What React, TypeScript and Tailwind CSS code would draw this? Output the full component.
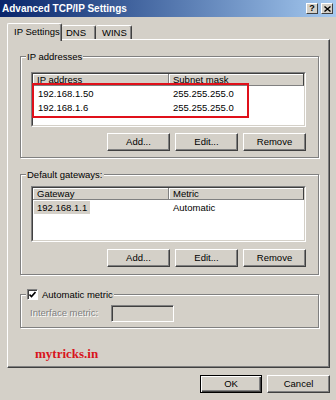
import type { ReactNode } from 'react';

const font = { fontFamily: '"Liberation Sans", Arial, sans-serif' };

function Btn({ label, isDefault = false }: { label: string; isDefault?: boolean }) {
  if (isDefault) {
    return (
      <button className="w-[62px] h-[18px] bg-[#d4d0c8] border border-black shadow-[inset_1px_1px_0_#fff,inset_-1px_-1px_0_#404040,inset_-2px_-2px_0_#808080] text-[9.5px] leading-none text-black">
        {label}
      </button>
    );
  }
  return (
    <button className="w-[63px] h-[18px] bg-[#d4d0c8] border border-t-white border-l-white border-r-[#404040] border-b-[#404040] shadow-[inset_-1px_-1px_0_#808080] text-[9.5px] leading-none text-black">
      {label}
    </button>
  );
}

function Group({ label, children, className }: { label: ReactNode; children: ReactNode; className: string }) {
  return (
    <div className={'relative w-[299px] border border-[#808080] shadow-[inset_1px_1px_0_#fff,1px_1px_0_#fff] ' + className}>
      <div className="absolute -top-[7px] left-[5px] px-[1px] bg-[#d4d0c8] flex items-center h-[13px] text-[9.5px] leading-[13px]">
        {label}
      </div>
      {children}
    </div>
  );
}

function ListView({ height, cols, children }: { height: string; cols: [string, string]; children: ReactNode }) {
  return (
    <div className={'relative border border-t-[#808080] border-l-[#808080] border-r-white border-b-white ' + height}>
      <div className="h-full bg-white border border-t-[#404040] border-l-[#404040] border-r-[#d4d0c8] border-b-[#d4d0c8]">
        <div className="flex h-[12px] text-[9.5px] leading-[11px]">
          <div className="w-[136px] bg-[#d4d0c8] border-r border-b border-r-[#808080] border-b-[#808080] shadow-[inset_1px_1px_0_#fff] pl-[4px]">
            {cols[0]}
          </div>
          <div className="flex-1 bg-[#d4d0c8] border-r border-b border-r-[#404040] border-b-[#808080] shadow-[inset_1px_1px_0_#fff] pl-[4px]">
            {cols[1]}
          </div>
        </div>
        {children}
      </div>
    </div>
  );
}

function Row({ a, b, selected = false }: { a: string; b: string; selected?: boolean }) {
  return (
    <div className="flex h-[13px] items-center text-[9.5px] leading-[13px] mt-[1px]">
      <div className="w-[136px] pl-[1px]">
        <span className={selected ? 'bg-[#d4d0c8] px-[3px] inline-block h-[13px]' : 'px-[4px]'}>{a}</span>
      </div>
      <div className="flex-1 pl-[4px]">{b}</div>
    </div>
  );
}

export default function App() {
  return (
    <div className="w-[336px] h-[400px] bg-[#d4d0c8] overflow-hidden flex flex-col text-black" style={font}>
      {/* title bar */}
      <div className="h-[17px] flex items-center justify-between pl-[2px] pr-[3px] bg-gradient-to-r from-[#0a246a] to-[#a6caf0]">
        <span className="text-white font-bold text-[10px] leading-none">Advanced TCP/IP Settings</span>
        <div className="flex gap-[3px]">
          <div className="w-[12px] h-[11px] bg-[#d4d0c8] border border-t-white border-l-white border-r-[#404040] border-b-[#404040] flex items-center justify-center text-[9px] font-bold leading-none">
            ?
          </div>
          <div className="w-[12px] h-[11px] bg-[#d4d0c8] border border-t-white border-l-white border-r-[#404040] border-b-[#404040] flex items-center justify-center">
            <svg width="7" height="6" viewBox="0 0 7 6">
              <path d="M0.5 0.5 L6.5 5.5 M6.5 0.5 L0.5 5.5" stroke="#000" strokeWidth="1.4" />
            </svg>
          </div>
        </div>
      </div>

      {/* tabs */}
      <div className="mt-[6px] h-[16px] flex items-end pl-[7px] relative z-10 text-[9.5px]">
        <div className="h-[18px] -mb-[2px] w-[55px] bg-[#d4d0c8] border-l border-t border-l-white border-t-white border-r border-r-[#404040] rounded-t-[2px] shadow-[inset_-1px_0_0_#808080] pl-[6px] pt-[2px] leading-[12px]">
          IP Settings
        </div>
        <div className="h-[14px] w-[34px] bg-[#d4d0c8] border-t border-t-white border-r border-r-[#404040] rounded-t-[2px] shadow-[inset_-1px_0_0_#808080] pl-[4px] leading-[13px]">
          DNS
        </div>
        <div className="h-[14px] w-[36px] bg-[#d4d0c8] border-t border-t-white border-r border-r-[#404040] rounded-t-[2px] shadow-[inset_-1px_0_0_#808080] pl-[6px] leading-[13px]">
          WINS
        </div>
      </div>

      {/* tab panel */}
      <div className="ml-[7px] mr-[6px] h-[329px] border border-t-white border-l-white border-r-[#404040] border-b-[#404040] shadow-[inset_-1px_-1px_0_#808080] pt-[16px] pl-[12px]">
        <Group label="IP addresses" className="pt-[15px] pl-[10px] pr-[12px] pb-[6px]">
          <ListView height="h-[55px]" cols={['IP address', 'Subnet mask']}>
            <Row a="192.168.1.50" b="255.255.255.0" />
            <Row a="192.168.1.6" b="255.255.255.0" />
          </ListView>
          <div className="absolute left-[11px] top-[26px] w-[217px] h-[35px] border-2 border-[#e0101a]" />
          <div className="mt-[6px] flex justify-end gap-[5px]">
            <Btn label="Add..." />
            <Btn label="Edit..." />
            <Btn label="Remove" />
          </div>
        </Group>

        <Group label="Default gateways:" className="mt-[16px] pt-[11px] pl-[10px] pr-[12px] pb-[7px]">
          <ListView height="h-[56px]" cols={['Gateway', 'Metric']}>
            <Row a="192.168.1.1" b="Automatic" selected />
          </ListView>
          <div className="mt-[7px] flex justify-end gap-[5px]">
            <Btn label="Add..." />
            <Btn label="Edit..." />
            <Btn label="Remove" />
          </div>
        </Group>

        <Group
          label={
            <>
              <span className="w-[11px] h-[11px] bg-white border border-t-[#808080] border-l-[#808080] border-r-white border-b-white shadow-[inset_1px_1px_0_#404040] flex items-center justify-center mr-[4px]">
                <svg width="7" height="7" viewBox="0 0 7 7">
                  <path d="M0.5 3.5 L2.5 5.5 L6.5 1" stroke="#000" strokeWidth="1.6" fill="none" />
                </svg>
              </span>
              <span>Automatic metric</span>
            </>
          }
          className="mt-[19px] pt-[10px] pl-[9px] pb-[5px]"
        >
          <div className="flex items-center">
            <span className="w-[81px] text-[9.5px] text-[#808080] [text-shadow:1px_1px_0_#fff]">Interface metric:</span>
            <div className="w-[63px] h-[17px] border border-t-[#808080] border-l-[#808080] border-r-white border-b-white shadow-[inset_1px_1px_0_#404040] bg-[#d4d0c8]" />
          </div>
        </Group>

        <div
          className="mt-[18px] ml-[15px] text-[13px] leading-[16px] font-bold text-[#d8141c]"
          style={{ fontFamily: '"Liberation Serif", "Times New Roman", serif' }}
        >
          mytricks.in
        </div>
      </div>

      {/* dialog buttons */}
      <div className="mt-[7px] flex justify-end gap-[5px] pr-[6px]">
        <Btn label="OK" isDefault />
        <Btn label="Cancel" />
      </div>
    </div>
  );
}
